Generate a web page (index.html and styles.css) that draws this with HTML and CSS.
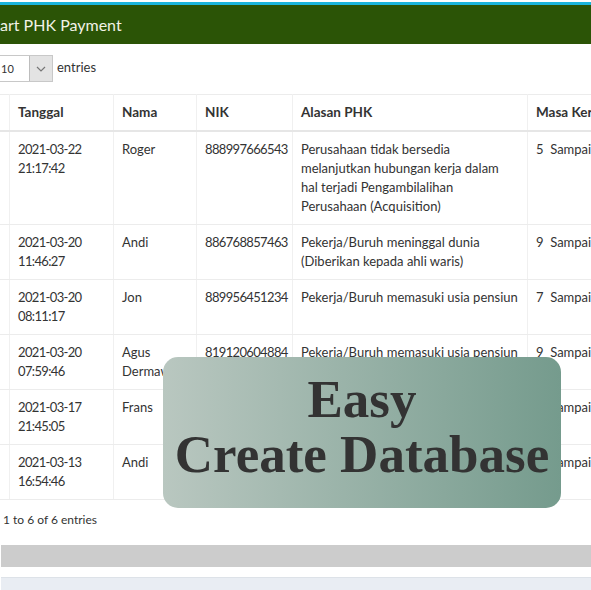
FILE: index.html
```html
<!DOCTYPE html>
<html>
<head>
<meta charset="utf-8">
<link rel="stylesheet" href="styles.css">
</head>
<body>
<div class="page">
  <div class="topline"></div>
  <div class="titlebar">art PHK Payment</div>
  <div class="length">
    <div class="select"><span class="val">10</span><span class="btn"><svg width="10" height="6" viewBox="0 0 10 6"><path d="M1 1 L5 5 L9 1" fill="none" stroke="#777" stroke-width="1.2"/></svg></span></div>
    <span class="lbl">entries</span>
  </div>
  <table class="grid">
    <colgroup>
      <col class="c0"><col class="c1"><col class="c2"><col class="c3"><col class="c4"><col class="c5">
    </colgroup>
    <thead>
      <tr><th>No</th><th>Tanggal</th><th>Nama</th><th>NIK</th><th>Alasan PHK</th><th>Masa Kerja</th></tr>
    </thead>
    <tbody>
      <tr><td>1</td><td class="num">2021-03-22 21:17:42</td><td>Roger</td><td class="num">888997666543</td><td>Perusahaan tidak bersedia melanjutkan hubungan kerja dalam<br>hal terjadi Pengambilalihan Perusahaan (Acquisition)</td><td class="nw">5&nbsp; Sampai dengan 6 Tahun</td></tr>
      <tr><td>2</td><td class="num">2021-03-20 11:46:27</td><td>Andi</td><td class="num">886768857463</td><td>Pekerja/Buruh meninggal dunia (Diberikan kepada ahli waris)</td><td class="nw">9&nbsp; Sampai dengan 10 Tahun</td></tr>
      <tr><td>3</td><td class="num">2021-03-20 08:11:17</td><td>Jon</td><td class="num">889956451234</td><td>Pekerja/Buruh memasuki usia pensiun</td><td class="nw">7&nbsp; Sampai dengan 8 Tahun</td></tr>
      <tr><td>4</td><td class="num">2021-03-20 07:59:46</td><td>Agus Dermawan</td><td class="num">819120604884</td><td>Pekerja/Buruh memasuki usia pensiun</td><td class="nw">9&nbsp; Sampai dengan 10 Tahun</td></tr>
      <tr><td>5</td><td class="num">2021-03-17 21:45:05</td><td>Frans</td><td class="num">887766554433</td><td>Pekerja/Buruh memasuki usia pensiun</td><td class="nw">8&nbsp; Sampai dengan 9 Tahun</td></tr>
      <tr><td>6</td><td class="num">2021-03-13 16:54:46</td><td>Andi</td><td class="num">886768857463</td><td>Pekerja/Buruh memasuki usia pensiun</td><td class="nw">9&nbsp; Sampai dengan 10 Tahun</td></tr>
    </tbody>
  </table>
  <div class="info">1 to 6 of 6 entries</div>
  <div class="graybar"></div>
  <div class="lightbar"></div>
  <div class="promo">
    <div class="promo-line">Easy</div>
    <div class="promo-line">Create Database</div>
  </div>
</div>
</body>
</html>
```
FILE: styles.css
```css
html, body {
  margin: 0;
  padding: 0;
  background: #fff;
}
body {
  width: 591px;
  height: 590px;
  overflow: hidden;
  font-family: "Lato", "Liberation Sans", sans-serif;
  font-size: 13px;
  color: #333;
}
.page {
  position: relative;
  width: 591px;
  height: 590px;
  overflow: hidden;
  padding-top: 2px;
  box-sizing: border-box;
}
.topline {
  height: 3px;
  background: #1cb5dc;
}
.titlebar {
  height: 39px;
  background: #2b5406;
  color: #f2f2e6;
  font-size: 16px;
  line-height: 39px;
  white-space: nowrap;
}
.length {
  display: flex;
  align-items: center;
  gap: 4px;
  margin-top: 11px;
  height: 27px;
}
.select {
  display: flex;
  width: 53px;
  height: 27px;
  box-sizing: border-box;
  border: 1px solid #c8c8c8;
  border-left: none;
  background: #fff;
}
.select .val {
  flex: 1;
  font-size: 11px;
  line-height: 25px;
  padding-left: 1px;
  color: #333;
}
.select .btn {
  width: 22px;
  background: #e3e3e3;
  border-left: 1px solid #bdbdbd;
  display: flex;
  align-items: center;
  justify-content: center;
}
.length .lbl {
  font-size: 13px;
  color: #333;
  margin-top: -4px;
}
.grid {
  margin-top: 12px;
  margin-left: -40px;
  width: 900px;
  border-collapse: collapse;
  table-layout: fixed;
  border-top: 1px solid #ececec;
}
.c0 { width: 49px; }
.c1 { width: 104px; }
.c2 { width: 83px; }
.c3 { width: 96px; }
.c4 { width: 235px; }
.c5 { width: 333px; }
.grid th, .grid td {
  padding: 8px;
  text-align: left;
  vertical-align: top;
  line-height: 19px;
  border-left: 1px solid #f0f0f0;
  border-right: 1px solid #f0f0f0;
}
.grid th {
  font-size: 13.5px;
  font-weight: 700;
  color: #333;
  border-bottom: 2px solid #e6e6e6;
}
.grid td {
  border-bottom: 1px solid #ececec;
  color: #333;
}
.grid td.num {
  letter-spacing: -0.65px;
}
.grid td.nw {
  white-space: nowrap;
  overflow: hidden;
}
.info {
  margin-top: 12px;
  padding-left: 3px;
  font-size: 12px;
  color: #333;
}
.graybar {
  margin-top: 18px;
  margin-left: 1px;
  height: 22px;
  background: #cccccc;
}
.lightbar {
  margin-top: 10px;
  margin-left: 1px;
  height: 14px;
  background: #e9edf3;
  border-top: 1px solid #dde2e8;
}
.promo {
  position: absolute;
  left: 163px;
  top: 357px;
  width: 398px;
  height: 151px;
  box-sizing: border-box;
  padding-bottom: 12px;
  border-radius: 15px;
  background: linear-gradient(to right, #b9c7c0, #759b8d);
  display: flex;
  flex-direction: column;
  align-items: center;
  justify-content: center;
  font-family: "Liberation Serif", "DejaVu Serif", serif;
  font-weight: 700;
  font-size: 53px;
  line-height: 55px;
  color: #333;
}
.promo-line {
  white-space: nowrap;
}
```
